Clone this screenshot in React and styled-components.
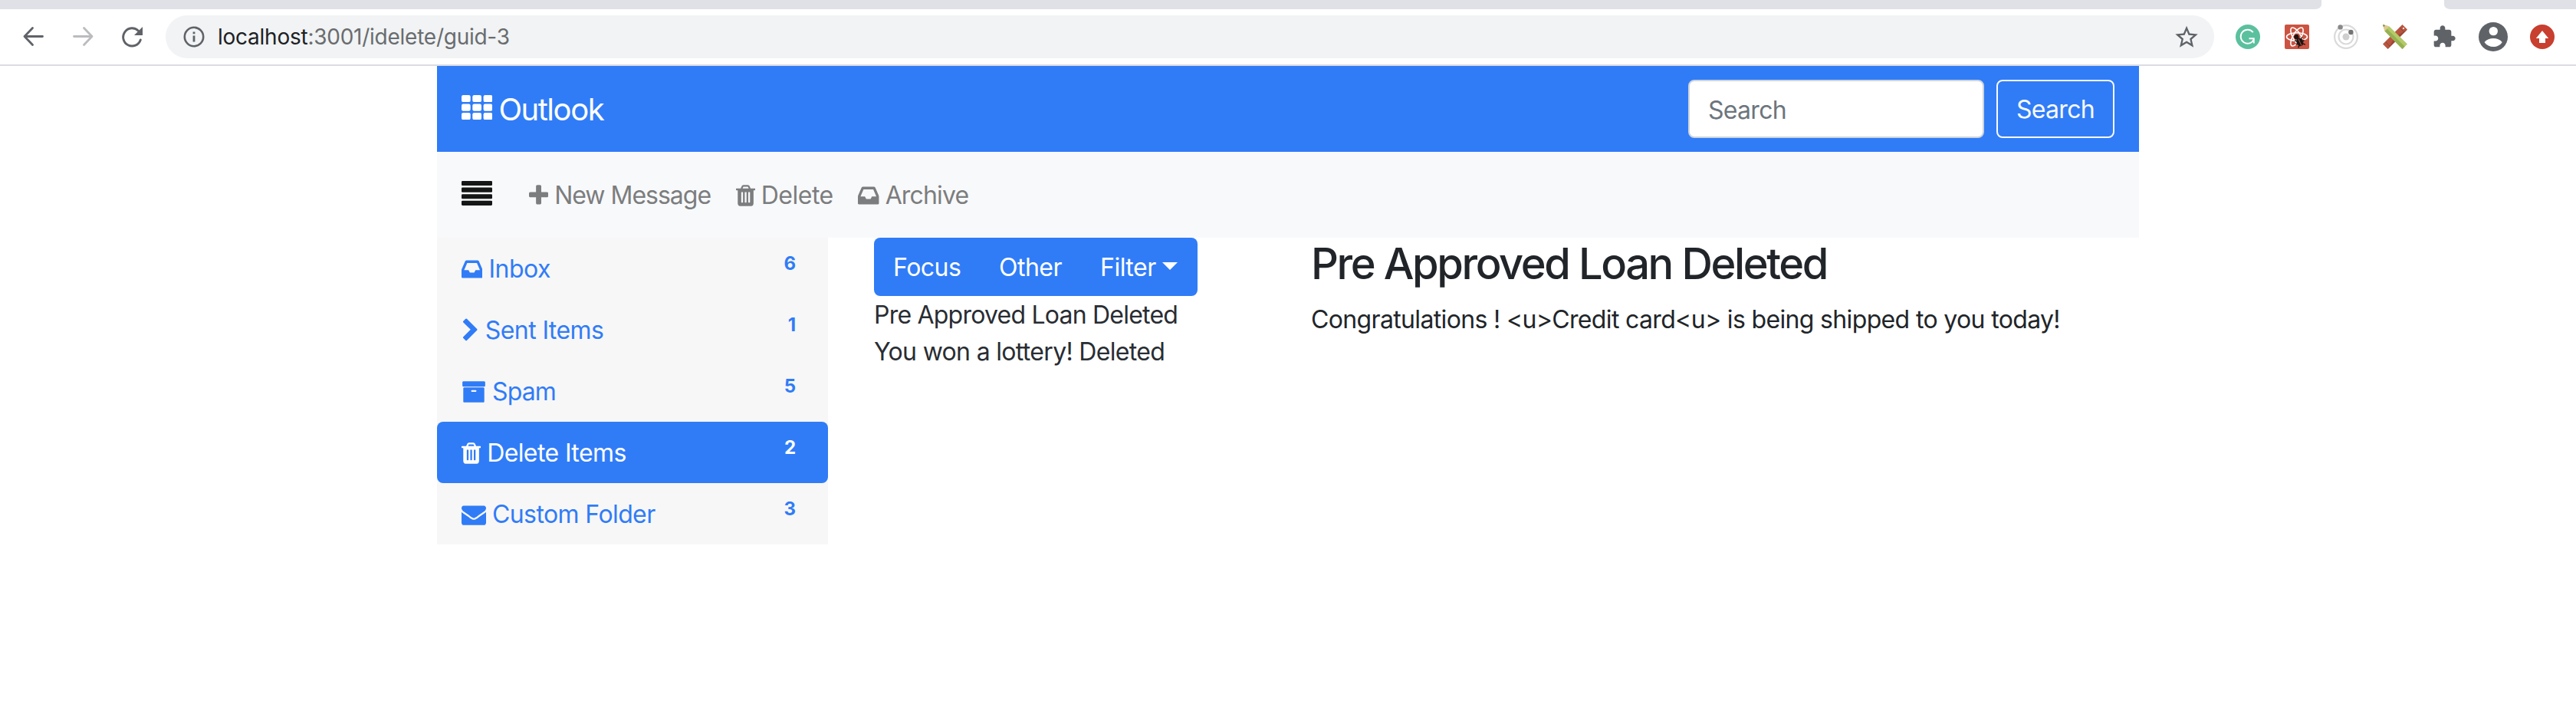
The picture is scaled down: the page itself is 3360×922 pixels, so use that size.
import React from 'react';
import styled, { createGlobalStyle } from 'styled-components';

const blue = '#307cf7';

const GlobalStyle = createGlobalStyle`
  * { box-sizing: border-box; }
  body {
    margin: 0;
    background: #fff;
    color: #212529;
    font: 400 32px/48px Inter, "Liberation Sans", sans-serif;
  }
  svg { display: block; flex: none; }
`;

/* ---------- browser chrome ---------- */

const TabStrip = styled.div`
  display: flex;
  justify-content: space-between;
  height: 12px;
`;

const InactiveTabs = styled.div`
  width: ${(p) => p.$width}px;
  background: #dfe1e6;
  border-radius: ${(p) => (p.$side === 'left' ? '0 0 16px 0' : '0 0 0 16px')} / 12px;
`;

const BrowserBar = styled.header`
  display: flex;
  align-items: center;
  height: 74px;
  padding: 0 12px 0 12px;
  border-bottom: 2px solid #dbdce1;
`;

const NavButtons = styled.div`
  display: flex;
  width: 204px;
`;

const IconCell = styled.div`
  display: flex;
  align-items: center;
  justify-content: center;
  width: 64px;
  height: 56px;
`;

const AddressBar = styled.div`
  display: flex;
  align-items: center;
  flex: 1;
  height: 56px;
  margin-right: 12px;
  padding: 0 20px 0 23px;
  border-radius: 28px;
  background: #f1f3f4;
`;

const Url = styled.span`
  flex: 1;
  margin-left: 17px;
  font-size: 28px;
  letter-spacing: -0.25px;
  color: #696c6f;
  b { font-weight: 400; color: #202124; }
`;

/* ---------- application ---------- */

const Container = styled.main`
  width: 2220px;
  margin: 0 auto;
`;

const Navbar = styled.nav`
  display: flex;
  align-items: center;
  height: 112px;
  padding: 0 32px;
  background: ${blue};
`;

const Brand = styled.a`
  display: flex;
  align-items: center;
  gap: 8px;
  flex: 1;
  color: #fff;
  font-size: 40px;
  svg { margin-bottom: 4px; }
`;

const SearchForm = styled.form`
  display: flex;
  gap: 16px;
`;

const SearchInput = styled.input`
  width: 386px;
  height: 76px;
  padding: 2px 24px 0;
  border: 2px solid #ced4da;
  border-radius: 8px;
  background: #fff;
  font: inherit;
  letter-spacing: -0.7px;
  &::placeholder { color: #6c757d; opacity: 1; }
`;

const SearchButton = styled.button`
  width: 154px;
  height: 76px;
  padding: 2px 0 0;
  border: 2px solid #f8f9fa;
  border-radius: 8px;
  background: transparent;
  color: #f8f9fa;
  font: inherit;
  letter-spacing: -0.7px;
`;

const ActionBar = styled.nav`
  display: flex;
  align-items: center;
  gap: 32.5px;
  height: 112px;
  padding: 0 32px;
  background: #f8f9fb;
`;

const MenuToggle = styled.span`
  margin: 0 15.5px 4px 0;
  color: #151717;
`;

const Label = styled.span`
  padding-top: 2px;
  letter-spacing: ${(p) => p.$tracking ?? -0.5}px;
  white-space: nowrap;
`;

const ActionLink = styled.a`
  display: flex;
  align-items: center;
  gap: 8px;
  color: #7c7d7e;
`;

const Columns = styled.div`
  display: grid;
  grid-template-columns: 510px 510px 1080px;
  column-gap: 60px;
  align-items: start;
`;

const Sidebar = styled.aside`
  background: #f7f7f7;
`;

const FolderLink = styled.a`
  display: flex;
  align-items: center;
  gap: 8px;
  height: 80px;
  padding: 0 42px 0 32px;
  border-radius: ${(p) => (p.$active ? 8 : 0)}px;
  background: ${(p) => (p.$active ? blue : 'transparent')};
  color: ${(p) => (p.$active ? '#fff' : blue)};
`;

const Count = styled.span`
  margin: 0 0 12px auto;
  font-size: 24px;
  font-weight: 700;
  line-height: 24px;
`;

const ButtonGroup = styled.div`
  display: grid;
  grid-template-columns: 138px 132px 152px;
  width: 422px;
  overflow: hidden;
  border-radius: 8px;
  background: ${blue};
`;

const GroupButton = styled.button`
  display: flex;
  align-items: center;
  gap: 8px;
  height: 76px;
  padding: 0 0 0 25px;
  border: 0;
  background: none;
  color: #fff;
  font: inherit;
`;

const Caret = styled.i`
  margin-bottom: 2px;
  border: solid transparent;
  border-width: 10px 10px 0;
  border-top-color: currentColor;
`;

const MessageList = styled.div`
  padding-top: 1px;
`;

const MessageRow = styled.div`
  color: #292d33;
  letter-spacing: ${(p) => p.$tracking}px;
`;

const Title = styled.h2`
  margin: 0 0 15px;
  padding-top: 1px;
  font-size: 56px;
  font-weight: 500;
  line-height: 67.2px;
  letter-spacing: -2.4px;
`;

const Body = styled.p`
  margin: 0;
  letter-spacing: -0.65px;
`;

/* ---------- icons ---------- */

const glyphs = {
  plus: [192, 1408, 'M1600 736v192q0 40-28 68t-68 28h-416v416q0 40-28 68t-68 28h-192q-40 0-68-28t-28-68v-416h-416q-40 0-68-28t-28-68v-192q0-40 28-68t68-28h416v-416q0-40 28-68t68-28h192q40 0 68 28t28 68v416h416q40 0 68 28t28 68z'],
  trash: [192, 1408, 'M704 1376v-704q0-14-9-23t-23-9h-64q-14 0-23 9t-9 23v704q0 14 9 23t23 9h64q14 0 23-9t9-23zm256 0v-704q0-14-9-23t-23-9h-64q-14 0-23 9t-9 23v704q0 14 9 23t23 9h64q14 0 23-9t9-23zm256 0v-704q0-14-9-23t-23-9h-64q-14 0-23 9t-9 23v704q0 14 9 23t23 9h64q14 0 23-9t9-23zm-544-992h448l-48-117q-7-9-17-11h-317q-10 2-17 11zm928 32v64q0 14-9 23t-23 9h-96v948q0 83-47 143.5t-113 60.5h-832q-66 0-113-58.5t-47-141.5v-952h-96q-14 0-23-9t-9-23v-64q0-14 9-23t23-9h309l70-167q15-37 54-63t79-26h320q40 0 79 26t54 63l70 167h309q14 0 23 9t9 23z'],
  inbox: [128, 1536, 'M1151 960h316q-1-3-2.5-8t-2.5-8l-212-496h-708l-212 496q-1 2-2.5 8t-2.5 8h316l95 192h320zm513 30v482q0 26-19 45t-45 19h-1408q-26 0-45-19t-19-45v-482q0-62 25-123l238-552q10-25 36.5-42t52.5-17h832q26 0 52.5 17t36.5 42l238 552q25 61 25 123z'],
  chevron: [234, 1280, 'M1363 877l-742 742q-19 19-45 19t-45-19l-166-166q-19-19-19-45t19-45l531-531-531-531q-19-19-19-45t19-45l166-166q19-19 45-19t45 19l742 742q19 19 19 45t-19 45z'],
  archive: [0, 1792, 'M1088 832q0-26-19-45t-45-19h-256q-26 0-45 19t-19 45 19 45 45 19h256q26 0 45-19t19-45zm576-192v960q0 26-19 45t-45 19h-1408q-26 0-45-19t-19-45v-960q0-26 19-45t45-19h1408q26 0 45 19t19 45zm64-448v256q0 26-19 45t-45 19h-1536q-26 0-45-19t-19-45v-256q0-26 19-45t45-19h1536q26 0 45 19t19 45z'],
  envelope: [0, 1792, 'M1792 710v794q0 66-47 113t-113 47h-1472q-66 0-113-47t-47-113v-794q44 49 101 87 362 246 497 345 57 42 92.5 65.5t94.5 48 110 24.5h2q51 0 110-24.5t94.5-48 92.5-65.5q170-123 498-345 57-39 100-87zm0-294q0 79-49 151t-122 123q-376 261-468 325-10 7-42.5 31t-54 38.5-52 32.5-57.5 27-50 9h-2q-23 0-50-9t-57.5-27-52-32.5-54-38.5-42.5-31q-91-64-262-182.5t-205-142.5q-62-42-117-115.5t-55-136.5q0-78 41.5-130t118.5-52h1472q65 0 112.5 47t47.5 113z'],
};

const GlyphSvg = styled.svg`
  margin-top: 1px;
  fill: currentColor;
`;

function Glyph({ name }) {
  const [x, width, d] = glyphs[name];
  return (
    <GlyphSvg width={width / 56} height="32" viewBox={`${x} 0 ${width} 1792`}>
      <path d={d} />
    </GlyphSvg>
  );
}

const GridIcon = () => (
  <svg width="40.4" height="32.4" viewBox="0 0 40.4 32.4" fill="currentColor">
    {[0, 11.6, 23.1].map((y) =>
      [0, 14.3, 28.6].map((x) => <rect key={`${x}-${y}`} x={x} y={y} width="11.7" height="9.1" rx="2.2" />)
    )}
  </svg>
);

const LinesIcon = () => (
  <svg width="40" height="32" viewBox="0 0 40 32" fill="currentColor">
    {[0, 8.6, 17.2, 25.8].map((y) => <rect key={y} y={y} width="40" height="6.1" rx="1.3" />)}
  </svg>
);

const ArrowIcon = ({ forward }) => (
  <svg width="32" height="32" viewBox="0 0 32 32" fill="none" stroke={forward ? '#babcbe' : '#5f6368'} strokeWidth="2.8" strokeLinecap="round" strokeLinejoin="round">
    <path d={forward ? 'M4.500 15.500H28M17.500 4.500L28 15.500L17.500 26.500' : 'M27.500 15.500H4M14.500 4.500L4 15.500L14.500 26.500'} />
  </svg>
);

const ReloadIcon = () => (
  <svg width="32" height="32" viewBox="0 0 32 32">
    <path d="M27.300 20A11.600 11.600 0 1 1 24.500 8.200" fill="none" stroke="#5f6368" strokeWidth="2.9" strokeLinecap="round" />
    <path d="M30 3V14H19z" fill="#5f6368" />
  </svg>
);

const InfoIcon = () => (
  <svg width="28" height="28" viewBox="0 0 28 28">
    <circle cx="14" cy="14" r="12.200" fill="none" stroke="#5f6368" strokeWidth="2.600" />
    <path d="M12.600 7.400h2.800v2.800h-2.800zM12.600 12.600h2.800v8h-2.800z" fill="#5f6368" />
  </svg>
);

const StarIcon = () => (
  <svg width="32" height="32" viewBox="0 0 24 24">
    <path fill="#5f6368" transform="translate(-.15 -.6) scale(1.100) translate(-.9 -.2)" d="M22 9.240l-7.190-.62L12 2 9.190 8.630 2 9.240l5.460 4.730L5.820 21 12 17.270 18.180 21l-1.630-7.030L22 9.240zM12 15.400l-3.760 2.270 1-4.280-3.320-2.880 4.380-.38L12 6.100l1.710 4.040 4.380.38-3.320 2.880 1 4.280L12 15.400z" />
  </svg>
);

const GrammarIcon = () => (
  <svg width="32" height="32" viewBox="0 0 32 32">
    <circle cx="16" cy="16" r="16" fill="#5bc09e" />
    <path d="M22.800 10.200A9 9 0 1 0 24 19.200M17.500 18.300H23.800V24.500" fill="none" stroke="#fff" strokeWidth="1.900" />
  </svg>
);

const ReactBugIcon = () => (
  <svg width="32" height="32" viewBox="0 0 32 32">
    <rect width="32" height="32" rx="2" fill="#cb5341" />
    <g fill="none" stroke="#fff" strokeWidth="1.600">
      <ellipse cx="16" cy="16" rx="13.500" ry="5.200" />
      <ellipse cx="16" cy="16" rx="13.500" ry="5.200" transform="rotate(60 16 16)" />
      <ellipse cx="16" cy="16" rx="13.500" ry="5.200" transform="rotate(120 16 16)" />
    </g>
    <path d="M17 20l6-1 4 2-1 7-6 4-5-3z" fill="#cb5341" />
    <g transform="rotate(-25 19 21)" fill="#1b1514" stroke="#1b1514">
      <circle cx="17.800" cy="15" r="2.600" />
      <ellipse cx="19" cy="23" rx="3.800" ry="5" />
      <path d="M13.500 18.500l3 2M24.500 18.500l-3 2M13 23.500h12M14 29l3-3M24 29l-3-3" strokeWidth="1.400" />
      <path d="M19 19v9" stroke="#cb5341" strokeWidth=".9" />
    </g>
  </svg>
);

const OrbitIcon = () => (
  <svg width="32" height="32" viewBox="0 0 32 32">
    <g fill="none" stroke="#dadada" strokeWidth="2.200">
      <circle cx="16" cy="16" r="14.900" />
      <circle cx="16" cy="16" r="9.500" />
    </g>
    <circle cx="16" cy="16" r="4.500" fill="#cfcfcf" />
    <circle cx="8.600" cy="3.400" r="3.200" fill="#898989" />
    <circle cx="22.400" cy="10" r="3.200" fill="#747474" />
  </svg>
);

const DesignIcon = () => (
  <svg width="32" height="32" viewBox="0 0 32 32">
    <path d="M25.500 0L32 6.500L6.500 32L0 25.500z" fill="#b9553f" />
    <path d="M16 16L32 6.500 6.500 32z" fill="#9b4937" />
    <path d="M22 4l6 6M4 23l5 5" stroke="#8b4334" strokeWidth="1" />
    <circle cx="27" cy="5" r="1.100" fill="#fff" />
    <path d="M0 0L8.500 2.500L32 25.500L25.500 32L2.500 8.500z" fill="#b4ca68" />
    <path d="M5.500 5.500L28.700 28.700L25.500 32L2.500 8.500z" fill="#96b152" />
    <path d="M0 0L8.500 2.500L2.500 8.500z" fill="#dfc98f" />
    <path d="M0 0L3.200 1L1 3.200z" fill="#7d8d48" />
  </svg>
);

const PuzzleIcon = () => (
  <svg width="32" height="32" viewBox="0 0 24 24">
    <path fill="#5f6368" d="M20.500 11H19V7c0-1.100-.9-2-2-2h-4V3.500C13 2.120 11.880 1 10.500 1S8 2.120 8 3.500V5H4c-1.100 0-1.990.9-1.990 2v3.800H3.500c1.490 0 2.700 1.210 2.700 2.700s-1.210 2.700-2.700 2.700H2V20c0 1.100.9 2 2 2h3.800v-1.500c0-1.490 1.210-2.700 2.700-2.700s2.700 1.210 2.700 2.700V22H17c1.100 0 2-.9 2-2v-4h1.500c1.380 0 2.500-1.120 2.500-2.500S21.880 11 20.500 11z" />
  </svg>
);

const AvatarIcon = () => (
  <svg width="38" height="38" viewBox="0 0 38 38">
    <circle cx="19" cy="19" r="19" fill="#5f6368" />
    <circle cx="19.300" cy="11.600" r="5.700" fill="#fff" />
    <path d="M7.500 26C13 19.200 25.500 19.200 30.700 26C25.500 34 13 34 7.500 26z" fill="#fff" />
  </svg>
);

const UpdateIcon = () => (
  <svg width="32" height="32" viewBox="0 0 32 32">
    <circle cx="16" cy="16" r="16" fill="#c83e2f" />
    <path d="M16 8L24.200 18H20V24H12V18H7.800z" fill="#fff" />
  </svg>
);

const extensions = [GrammarIcon, ReactBugIcon, OrbitIcon, DesignIcon, PuzzleIcon, AvatarIcon, UpdateIcon];

const actions = [
  { icon: 'plus', label: 'New Message', tracking: -1 },
  { icon: 'trash', label: 'Delete', tracking: -0.5 },
  { icon: 'inbox', label: 'Archive', tracking: -0.85 },
];

const folders = [
  { icon: 'inbox', label: 'Inbox', count: 6 },
  { icon: 'chevron', label: 'Sent Items', count: 1, tracking: -0.6 },
  { icon: 'archive', label: 'Spam', count: 5, tracking: -0.9 },
  { icon: 'trash', label: 'Delete Items', count: 2, active: true, tracking: -0.6 },
  { icon: 'envelope', label: 'Custom Folder', count: 3, tracking: -0.6 },
];

export default function App() {
  return (
    <>
      <GlobalStyle />
      <TabStrip>
        <InactiveTabs $side="left" $width={3028} />
        <InactiveTabs $side="right" $width={172} />
      </TabStrip>
      <BrowserBar>
        <NavButtons>
          <IconCell><ArrowIcon /></IconCell>
          <IconCell><ArrowIcon forward /></IconCell>
          <IconCell><ReloadIcon /></IconCell>
        </NavButtons>
        <AddressBar>
          <InfoIcon />
          <Url><b>localhost</b>:3001/idelete/guid-3</Url>
          <StarIcon />
        </AddressBar>
        {extensions.map((Icon, i) => <IconCell key={i}><Icon /></IconCell>)}
      </BrowserBar>

      <Container>
        <Navbar>
          <Brand><GridIcon /><Label $tracking={-1.45}>Outlook</Label></Brand>
          <SearchForm>
            <SearchInput placeholder="Search" />
            <SearchButton type="button">Search</SearchButton>
          </SearchForm>
        </Navbar>
        <ActionBar>
          <MenuToggle><LinesIcon /></MenuToggle>
          {actions.map((a) => (
            <ActionLink key={a.label}>
              <Glyph name={a.icon} />
              <Label $tracking={a.tracking}>{a.label}</Label>
            </ActionLink>
          ))}
        </ActionBar>
        <Columns>
          <Sidebar>
            {folders.map((f) => (
              <FolderLink key={f.label} $active={f.active}>
                <Glyph name={f.icon} />
                <Label $tracking={f.tracking}>{f.label}</Label>
                <Count>{f.count}</Count>
              </FolderLink>
            ))}
          </Sidebar>
          <section>
            <ButtonGroup>
              <GroupButton><Label>Focus</Label></GroupButton>
              <GroupButton><Label>Other</Label></GroupButton>
              <GroupButton><Label>Filter</Label><Caret /></GroupButton>
            </ButtonGroup>
            <MessageList>
              <MessageRow $tracking={-0.78}>Pre Approved Loan Deleted</MessageRow>
              <MessageRow $tracking={-0.68}>You won a lottery! Deleted</MessageRow>
            </MessageList>
          </section>
          <article>
            <Title>Pre Approved Loan Deleted</Title>
            <Body>{'Congratulations ! <u>Credit card<u> is being shipped to you today!'}</Body>
          </article>
        </Columns>
      </Container>
    </>
  );
}
